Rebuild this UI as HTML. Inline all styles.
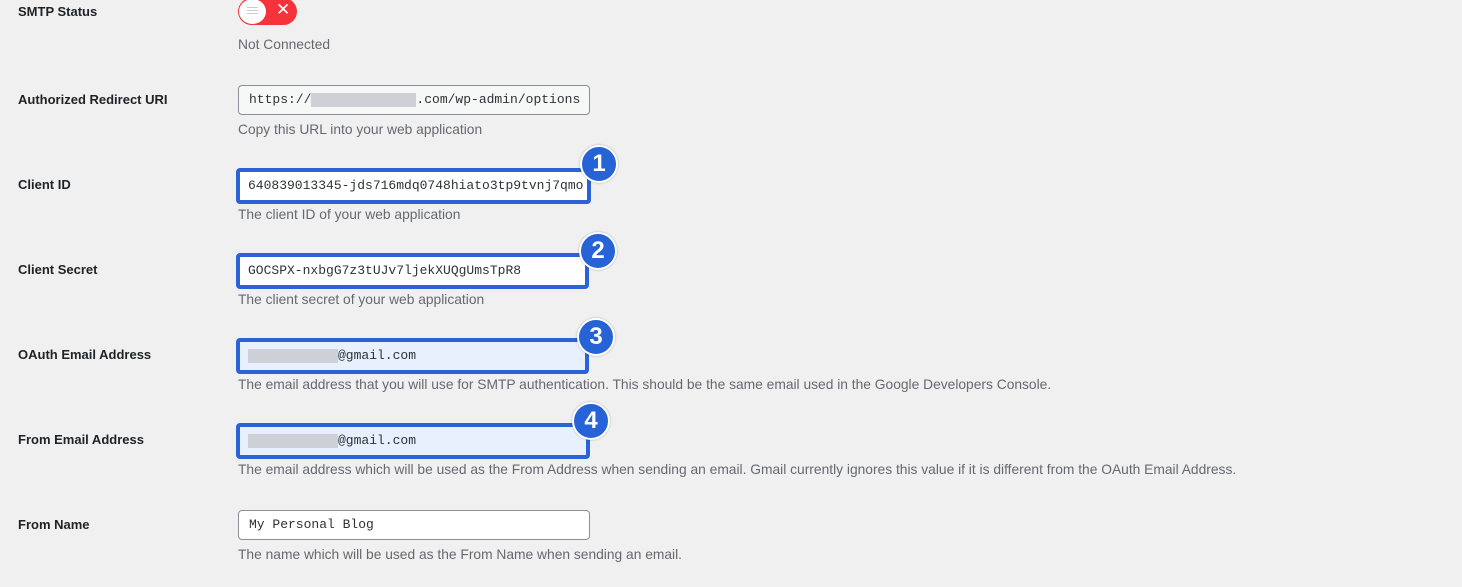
<!DOCTYPE html>
<html><head><style>
body{margin:0;width:1462px;height:587px;background:#f0f0f1;font-family:"Liberation Sans",sans-serif;position:relative;overflow:hidden}
.l{position:absolute;left:18px;font-size:13px;font-weight:bold;color:#1d2327}
.d{position:absolute;left:238px;font-size:13.8px;color:#646970;white-space:nowrap}
.i{position:absolute;left:238px;width:340px;height:28px;border:1px solid #8c8f94;border-radius:4px;background:#fff;font-family:"Liberation Mono",monospace;font-size:13px;line-height:28px;padding-left:10px;color:#2c3338;white-space:nowrap;overflow:hidden;box-sizing:content-box}
.h{left:236px;width:339px;height:28px;border:4px solid #2b62d8;border-radius:4px;line-height:28px;padding-left:8px}
.blue{background:#e8f0fe}
.b{position:absolute;width:34px;height:34px;border-radius:50%;background:#2563d6;border:2px solid #fff;color:#fff;font-weight:bold;font-size:24px;text-align:center;line-height:34px;box-shadow:0 0 2px rgba(0,0,0,.3)}
.blur{display:inline-block;height:14px;background:#cdd0d6;vertical-align:middle}
</style></head><body>
<div class="l" style="top:4px">SMTP Status</div>
<div style="position:absolute;left:238px;top:-2px;width:59px;height:27px;border-radius:14px;background:#f5333b"></div>
<div style="position:absolute;left:239px;top:-1px;width:27px;height:25px;border-radius:50%;background:#fff"></div>
<div style="position:absolute;left:247px;top:7px;width:11px;height:1px;background:#ccc;box-shadow:0 3px 0 #ccc,0 6px 0 #ccc"></div>
<div style="position:absolute;left:276px;top:0px;color:#fff;font-size:17px">✕</div>
<div class="d" style="top:37px">Not Connected</div>

<div class="l" style="top:92px">Authorized Redirect URI</div>
<div class="i" style="top:85px;background:#f6f7f7">https://<span class="blur" style="width:105px"></span>.com/wp-admin/options</div>
<div class="d" style="top:122px">Copy this URL into your web application</div>

<div class="l" style="top:177px">Client ID</div>
<div class="i h" style="top:168px">640839013345-jds716mdq0748hiato3tp9tvnj7qmo</div>
<div class="b" style="left:580px;top:145px">1</div>
<div class="d" style="top:207px">The client ID of your web application</div>

<div class="l" style="top:262px">Client Secret</div>
<div class="i h" style="top:253px;width:337px">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</div>
<div class="b" style="left:579px;top:232px">2</div>
<div class="d" style="top:292px">The client secret of your web application</div>

<div class="l" style="top:347px">OAuth Email Address</div>
<div class="i h blue" style="top:338px;width:337px"><span class="blur" style="width:90px"></span>@gmail.com</div>
<div class="b" style="left:577px;top:318px">3</div>
<div class="d" style="top:377px">The email address that you will use for SMTP authentication. This should be the same email used in the Google Developers Console.</div>

<div class="l" style="top:432px">From Email Address</div>
<div class="i h blue" style="top:423px;width:338px"><span class="blur" style="width:90px"></span>@gmail.com</div>
<div class="b" style="left:572px;top:402px">4</div>
<div class="d" style="top:462px">The email address which will be used as the From Address when sending an email. Gmail currently ignores this value if it is different from the OAuth Email Address.</div>

<div class="l" style="top:517px">From Name</div>
<div class="i" style="top:510px">My Personal Blog</div>
<div class="d" style="top:547px">The name which will be used as the From Name when sending an email.</div>
</body></html>
